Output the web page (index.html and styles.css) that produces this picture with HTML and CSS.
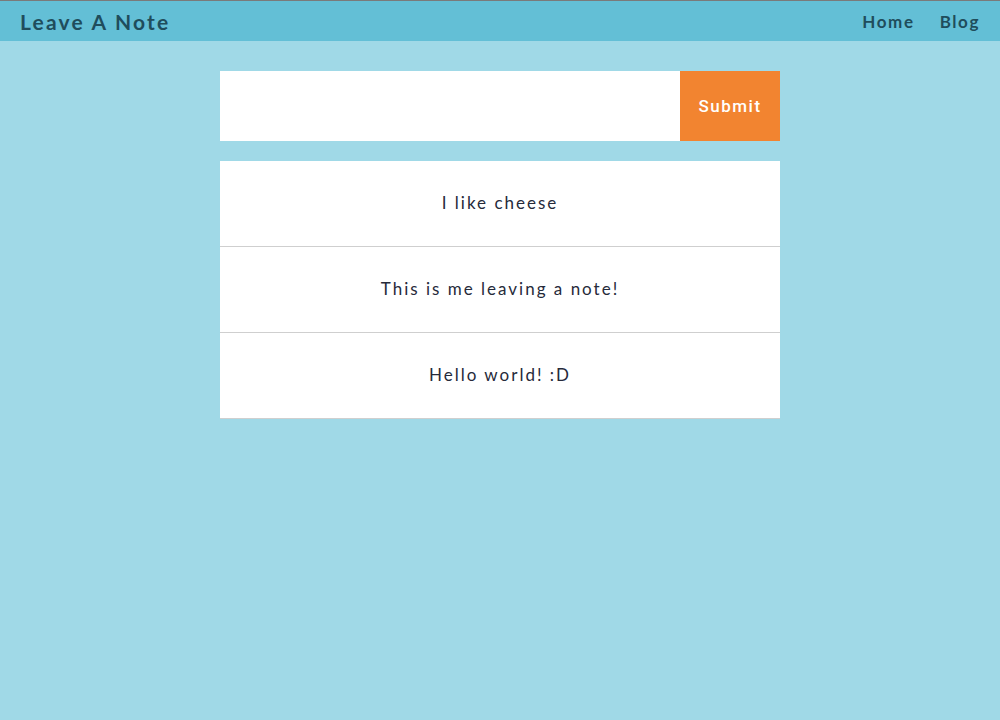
FILE: index.html
```html
<!DOCTYPE html>
<html>
    <head>
        <title>Leave A Note</title>
        <link rel="stylesheet" href="styles.css">
    </head>
    <body>
        <div class="header">
            <p class="logo">Leave A Note</p>
            <div class="nav">
                <a href="#" class="nav-link">Home</a>
                <a href="#" class="nav-link">Blog</a>
            </div>
        </div>

        <div class="main">
            <form class="note-form">
                <input type="text" class="note-input">
                <button type="button" class="submit">Submit</button>
            </form>

            <ul class="notes">
                <li class="note">I like cheese</li>
                <li class="note">This is me leaving a note!</li>
                <li class="note">Hello world! :D</li>
            </ul>
        </div>
    </body>
</html>
```

FILE: styles.css
```css
body {
    margin: 0;
    background-color: #a0d9e7;
    font-family: "Lato", "DejaVu Sans", sans-serif;
    min-height: 720px;
}
.header {
    display: flex;
    justify-content: space-between;
    align-items: center;
    height: 40px;
    padding: 0 20px;
    background-color: #63bfd6;
    border-top: 1px solid #7a7a7a;
}
.logo {
    margin: 0;
    font-size: 21px;
    font-weight: 700;
    letter-spacing: 2.2px;
    color: #1f4d5c;
}
.nav {
    display: flex;
    gap: 25px;
}
.nav-link {
    font-size: 17px;
    font-weight: 700;
    letter-spacing: 1.6px;
    color: #1f4d5c;
    text-decoration: none;
}
.main {
    width: 560px;
    margin: 30px auto 0;
}
.note-form {
    display: flex;
    height: 70px;
    margin: 0 0 20px;
}
.note-input {
    flex: 1;
    border: none;
    outline: none;
    padding: 0 20px;
    font-size: 17px;
    background-color: white;
}
.submit {
    width: 100px;
    border: none;
    background-color: #f28430;
    color: white;
    font-family: "Roboto", sans-serif;
    font-size: 17px;
    font-weight: 500;
    letter-spacing: 1.5px;
    cursor: pointer;
}
.notes {
    list-style-type: none;
    margin: 0;
    padding: 0;
}
.note {
    display: flex;
    align-items: center;
    justify-content: center;
    height: 83px;
    padding-bottom: 2px;
    background-color: white;
    border-bottom: 1px solid #cfcfcf;
    font-size: 17px;
    letter-spacing: 2px;
    color: #262a3a;
}
```
